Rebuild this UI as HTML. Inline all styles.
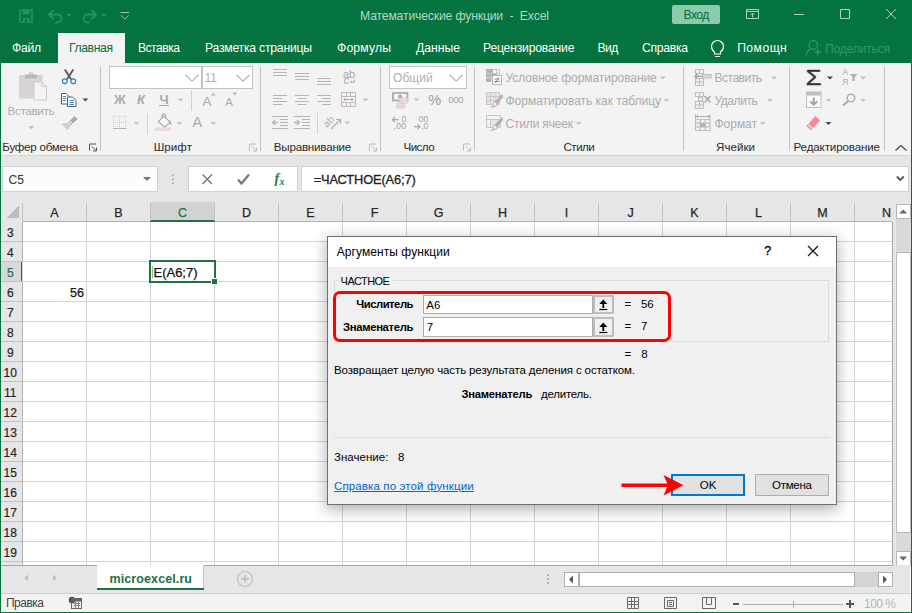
<!DOCTYPE html>
<html lang="ru"><head><meta charset="utf-8"><title>Математические функции - Excel</title>
<style>
html,body{margin:0;padding:0;}
body{width:912px;height:613px;overflow:hidden;position:relative;background:#fff;font-family:"Liberation Sans",sans-serif;}
.a{position:absolute;box-sizing:border-box;}
.t{position:absolute;white-space:pre;}
svg{position:absolute;overflow:visible;}
</style></head><body>
<div class="a" style="left:0px;top:0px;width:912px;height:63px;background:#04733f;"></div>
<div class="a" style="left:0px;top:63px;width:912px;height:93px;background:#f3f3f3;"></div>
<div class="a" style="left:0px;top:155px;width:912px;height:1px;background:#d4d4d4;"></div>
<div class="a" style="left:0px;top:156px;width:912px;height:46px;background:#e6e6e6;"></div>
<div class="a" style="left:58px;top:33px;width:67px;height:30px;background:#f3f3f3;"></div>
<span class="t" style="top:7.50px;font-size:12.2px;line-height:16px;color:#b1d9c5;left:360.00px;letter-spacing:-0.157px;">Математические функции  -  Excel</span>
<svg style="left:0;top:0" width="150" height="33" viewBox="0 0 150 33" fill="none" stroke="#1f9562" stroke-width="1.800">
<path d="M20 10h12v12h-12z" stroke-width="1.600"/><path d="M22.500 10h7v4.500h-7z M23 22v-4h6.500v4" fill="#1f9562" stroke="none"/><rect x="25" y="19" width="2" height="3" fill="#04733f" stroke="none"/>
<path d="M53.500 10l-4.500 4.500 4.500 4.500 M49.500 14.500h8a4 4 0 0 1 0 8h-2"/>
<path d="M66.500 14l2.500 3 2.500-3z" fill="#1f9562" stroke="none"/>
<path d="M91.500 10l4.500 4.500-4.500 4.500 M95.500 14.500h-8a4 4 0 0 0 0 8h2"/>
<path d="M101.500 14l2.500 3 2.500-3z" fill="#1f9562" stroke="none"/>
</svg>
<svg style="left:0;top:0" width="150" height="33" viewBox="0 0 150 33" fill="none" stroke="#8fcaae" stroke-width="1">
<path d="M120.500 12.500h8.500 M121 15.500l3.750 3.500 3.750-3.500"/></svg>
<div class="a" style="left:672px;top:5px;width:48px;height:19px;background:#8ccbae;border-radius:2px;"></div>
<span class="t" style="top:6.60px;font-size:12.2px;line-height:16px;color:#0a6b3c;left:683.44px;letter-spacing:-0.550px;">Вход</span>
<svg style="left:0;top:0" width="912" height="33" viewBox="0 0 912 33" fill="none" stroke="#a9d8c0" stroke-width="1">
<path d="M746.500 9.500h12v9h-12z M746.500 11.500h12 M752.500 17.500v-4 M750.500 15l2-2 2 2"/>
<path d="M794 14.500h10"/>
<path d="M840.500 9.500h9v9h-9z"/>
<path d="M886 9l10 10 M896 9l-10 10"/>
</svg>
<span class="t" style="top:40.00px;font-size:12.2px;line-height:16px;color:#fff;left:12.00px;letter-spacing:-0.321px;">Файл</span>
<span class="t" style="top:40.00px;font-size:12.2px;line-height:16px;color:#fff;left:138.00px;letter-spacing:-0.550px;">Вставка</span>
<span class="t" style="top:40.00px;font-size:12.2px;line-height:16px;color:#fff;left:205.00px;letter-spacing:-0.223px;">Разметка страницы</span>
<span class="t" style="top:40.00px;font-size:12.2px;line-height:16px;color:#fff;left:337.00px;letter-spacing:0.161px;">Формулы</span>
<span class="t" style="top:40.00px;font-size:12.2px;line-height:16px;color:#fff;left:416.00px;letter-spacing:-0.006px;">Данные</span>
<span class="t" style="top:40.00px;font-size:12.2px;line-height:16px;color:#fff;left:483.00px;letter-spacing:-0.201px;">Рецензирование</span>
<span class="t" style="top:40.00px;font-size:12.2px;line-height:16px;color:#fff;left:597.53px;letter-spacing:-0.550px;">Вид</span>
<span class="t" style="top:40.00px;font-size:12.2px;line-height:16px;color:#fff;left:642.00px;letter-spacing:-0.302px;">Справка</span>
<span class="t" style="top:40.00px;font-size:12.2px;line-height:16px;color:#fff;left:737.15px;letter-spacing:0.450px;">Помощн</span>
<span class="t" style="top:40.00px;font-size:12.2px;line-height:16px;color:#0a6b3c;left:69.00px;letter-spacing:-0.398px;">Главная</span>
<span class="t" style="top:40.50px;font-size:12.2px;line-height:16px;color:#2f9a68;left:825.00px;letter-spacing:-0.255px;">Поделиться</span>
<svg style="left:0;top:33px" width="912" height="30" viewBox="0 33 912 30" fill="none" stroke="#fff" stroke-width="1.200">
<path d="M714.500 52.500c-2-1.500-3-3-3-5.500a6 6 0 0 1 12 0c0 2.500-1 4-3 5.500v2h-6z M715 57h5" transform="translate(0,-0.500)"/>
<g stroke="#2f9a68" stroke-width="1.300"><circle cx="813.300" cy="45" r="4.300"/><path d="M806.200 55.500c0.300-3.500 2-5.500 4.800-6.500 M817.700 49v6.500 M814.500 52.200h6.500"/></g>
</svg>
<div class="a" style="left:100px;top:67px;width:1px;height:84px;background:#c3c3c3;"></div>
<div class="a" style="left:260px;top:67px;width:1px;height:84px;background:#c3c3c3;"></div>
<div class="a" style="left:380px;top:67px;width:1px;height:84px;background:#c3c3c3;"></div>
<div class="a" style="left:474px;top:67px;width:1px;height:84px;background:#c3c3c3;"></div>
<div class="a" style="left:683px;top:67px;width:1px;height:84px;background:#c3c3c3;"></div>
<div class="a" style="left:789px;top:67px;width:1px;height:84px;background:#c3c3c3;"></div>
<div class="a" style="left:884px;top:67px;width:1px;height:84px;background:#c3c3c3;"></div>
<div class="a" style="left:191px;top:90px;width:1px;height:21px;background:#d0d0d0;"></div>
<div class="a" style="left:147px;top:114px;width:1px;height:20px;background:#d0d0d0;"></div>
<div class="a" style="left:317.3px;top:113px;width:1px;height:21px;background:#d0d0d0;"></div>
<span class="t" style="top:139.20px;font-size:11.6px;line-height:15px;color:#2b2b2b;left:2.30px;letter-spacing:-0.253px;">Буфер обмена</span>
<span class="t" style="top:139.20px;font-size:11.6px;line-height:15px;color:#2b2b2b;left:153.70px;letter-spacing:0.039px;">Шрифт</span>
<span class="t" style="top:139.20px;font-size:11.6px;line-height:15px;color:#2b2b2b;left:273.80px;letter-spacing:-0.209px;">Выравнивание</span>
<span class="t" style="top:139.20px;font-size:11.6px;line-height:15px;color:#2b2b2b;left:403.53px;letter-spacing:-0.550px;">Число</span>
<span class="t" style="top:139.20px;font-size:11.6px;line-height:15px;color:#2b2b2b;left:563.50px;letter-spacing:-0.525px;">Стили</span>
<span class="t" style="top:139.20px;font-size:11.6px;line-height:15px;color:#2b2b2b;left:716.00px;letter-spacing:0.023px;">Ячейки</span>
<span class="t" style="top:139.20px;font-size:11.6px;line-height:15px;color:#2b2b2b;left:793.50px;letter-spacing:-0.140px;">Редактирование</span>
<svg style="left:0;top:0" width="912" height="160" viewBox="0 0 912 160"><path d="M89.5 150.500v-6.500h6.500 M92 146.500l4 4 M96.5 147.500v3.500h-3.500" fill="none" stroke="#555" stroke-width="1"/><path d="M249.5 150.500v-6.500h6.500 M252 146.500l4 4 M256.5 147.500v3.500h-3.500" fill="none" stroke="#bbb" stroke-width="1"/><path d="M369.5 150.500v-6.500h6.500 M372 146.500l4 4 M376.5 147.500v3.500h-3.500" fill="none" stroke="#bbb" stroke-width="1"/><path d="M463.5 150.500v-6.500h6.500 M466 146.500l4 4 M470.5 147.500v3.500h-3.500" fill="none" stroke="#bbb" stroke-width="1"/><path d="M895.500 150.500l5.500-5 5.500 5" fill="none" stroke="#444" stroke-width="1.200"/></svg>
<svg style="left:0;top:0" width="110" height="160" viewBox="0 0 110 160">
<rect x="19" y="75" width="23.500" height="23.500" rx="1" fill="#d9d3d6"/>
<path d="M25 78.500v-4h3.700a2.300 2.300 0 0 1 4.600 0h3.700v4z" fill="#bdb5b9"/><circle cx="31" cy="73.800" r="1" fill="#e6e0e3"/>
<path d="M34 82h8l4.500 4.500v13.500h-12.500z" fill="#f7f3f6" stroke="#cfc7cc" stroke-width="1"/>
<path d="M42 82v4.500h4.500" fill="none" stroke="#cfc7cc"/>
<path d="M28.3 126.0h6l-3 3z" fill="#bdbdbd" stroke="none"/>
<g fill="none" stroke="#5c5c5c" stroke-width="1.900"><path d="M64.800 69.500l6.300 9.700 M73.300 69.500l-6.300 9.700"/></g>
<g fill="none" stroke="#2f80c3" stroke-width="1.200"><circle cx="64.800" cy="81.200" r="2.400"/><circle cx="73.200" cy="81.200" r="2.400"/></g>
<g fill="#fff" stroke="#5a5a5a" stroke-width="1"><path d="M61.500 93.500h4.500l3 3v7.500h-7.500z"/><path d="M67.500 97h5l3.500 3.500v6h-8.500z"/></g>
<g stroke="#3a86c8" stroke-width="1"><path d="M63 96.500h3 M63 98.500h3 M63 100.500h3 M69.500 100.500h4.500 M69.500 102.500h4.500 M69.500 104.500h4.500"/></g>
<path d="M82.4 98.5h6l-3 3z" fill="#505050" stroke="none"/>
<path d="M74.500 116l3 3-4.500 4.500-3-3z" fill="#aea8ab"/><path d="M69.500 121l3 3-1 1.300-3.300-3.300z" fill="#bfb9bc"/><path d="M68 122.500l3 3-3.500 4.500-6.300-6.300z" fill="#d2ccd0"/>
</svg>
<span class="t" style="top:103.30px;font-size:11.6px;line-height:15px;color:#adabac;left:7.50px;letter-spacing:-0.306px;">Вставить</span>
<div class="a" style="left:109px;top:66px;width:93px;height:22.5px;background:#fff;border:1px solid #c3c3c3;"></div>
<div class="a" style="left:202px;top:66px;width:51px;height:22.5px;background:#fff;border:1px solid #c3c3c3;"></div>
<span class="t" style="top:69.50px;font-size:12px;line-height:16px;color:#b5adb1;left:204.57px;">11</span>
<span class="t" style="top:91.00px;font-size:13px;line-height:17px;color:#aaa;font-weight:700;left:114.03px;">Ж</span>
<span class="t" style="top:91.00px;font-size:13px;line-height:17px;color:#aaa;font-weight:700;font-style:italic;left:136.95px;">К</span>
<span class="t" style="top:91.00px;font-size:13px;line-height:17px;color:#aaa;font-weight:700;left:159.48px;">Ч</span>
<div class="a" style="left:159px;top:105px;width:10px;height:1px;background:#aaa;"></div>
<span class="t" style="top:92.50px;font-size:13.5px;line-height:18px;color:#aaa;left:202.55px;">A</span>
<span class="t" style="top:95.00px;font-size:11.5px;line-height:15px;color:#aaa;left:225.36px;">A</span>
<span class="t" style="top:113.10px;font-size:14.5px;line-height:19px;color:#aaa;left:192.56px;">A</span>
<svg style="left:0;top:0" width="270" height="160" viewBox="0 0 270 160">
<g fill="none" stroke="#a9a9a9" stroke-width="1.100"><path d="M185.500 74.800l6.500 6.300 6.500-6.300 M236.500 74.800l6.500 6.300 6.500-6.300"/></g>
<path d="M177.5 98.5h6l-3 3z" fill="#c4c4c4" stroke="none"/><path d="M133.5 122.0h6l-3 3z" fill="#c4c4c4" stroke="none"/><path d="M176.6 122.0h6l-3 3z" fill="#c4c4c4" stroke="none"/><path d="M210.4 122.0h6l-3 3z" fill="#c4c4c4" stroke="none"/>
<path d="M211 95.500h4.500l-2.250-3z M232.500 92.500h4.500l-2.250 3z" fill="#b5b5b5"/>
<g stroke="#d9c3cf" stroke-width="1" stroke-dasharray="1 1" fill="none"><path d="M113 116.500h13.500 M113 122.500h13.500 M113.500 116v12 M119.500 116v12 M125.500 116v12"/></g>
<path d="M113 128.500h13.500" stroke="#b8b0b4" stroke-width="1"/>
<path d="M158.500 121.500l5.500-5.500 6 6-5.500 5.500z M162 118v-2a1.800 1.800 0 0 1 3.600 0v3" fill="#fbfbfb" stroke="#ababab" stroke-width="1.200"/>
<path d="M169 120c1.800 1 2.500 3 2 5.500-1.200-1-1.800-2.500-2-5.500z" fill="#a5a5a5"/>
<rect x="155" y="127.500" width="16" height="3.500" fill="#ead9e1"/>
</svg>
<svg style="left:0;top:0" width="400" height="160" viewBox="0 0 400 160"><path d="M273 69.5H287 M273 72.5H287 M273 75.5H287 " stroke="#b9b3b6" stroke-width="1" fill="none"/><path d="M295 73.5H309 M295 76.5H309 M295 79.5H309 " stroke="#b9b3b6" stroke-width="1" fill="none"/><path d="M317 78.5H331 M317 81.5H331 M317 84.5H331 " stroke="#b9b3b6" stroke-width="1" fill="none"/><path d="M273 95.5H287 M273 98.5H282 M273 101.5H287 M273 104.5H282 " stroke="#b9b3b6" stroke-width="1" fill="none"/><path d="M295 95.5H309 M297.5 98.5H306.5 M295 101.5H309 M297.5 104.5H306.5 " stroke="#b9b3b6" stroke-width="1" fill="none"/><path d="M317 95.5H331 M322 98.5H331 M317 101.5H331 M322 104.5H331 " stroke="#b9b3b6" stroke-width="1" fill="none"/><path d="M272 116.5H288 M280 119.5H288 M280 122.5H288 M280 125.5H288 M272 128.5H288 " stroke="#b9b3b6" stroke-width="1" fill="none"/><path d="M278 122.500h-5.500 M275 120l-2.500 2.500 2.500 2.500" stroke="#b9b3b6" stroke-width="1.300" fill="none"/><path d="M294 116.5H310 M302 119.5H310 M302 122.5H310 M302 125.5H310 M294 128.5H310 " stroke="#b9b3b6" stroke-width="1" fill="none"/><path d="M294 122.500h5.500 M297 120l2.500 2.500-2.500 2.500" stroke="#b9b3b6" stroke-width="1.300" fill="none"/><g fill="none" stroke="#c4b8be" stroke-width="1"><path d="M341.500 92.500h14v14h-14z M341.500 96.500h14 M341.500 102.500h14 M346.500 92.500v4 M350.500 92.500v4 M346.500 102.500v4 M350.500 102.500v4"/>
<path d="M344 99.500h9 M345.500 98l-1.500 1.500 1.500 1.500 M351.500 98l1.500 1.500-1.500 1.500" stroke="#aaa"/></g><path d="M362.4 98.5h6l-3 3z" fill="#c4c4c4" stroke="none"/><path d="M344.4 121.5h6l-3 3z" fill="#c4c4c4" stroke="none"/><path d="M331 129l9-9 M336 119.500h4.500v4.500" stroke="#b0b0b0" stroke-width="1.200" fill="none"/><path d="M354.500 79.500v2.500h-4 M352 80.500l-1.500 1.500 1.500 1.500" stroke="#b0b0b0" stroke-width="1" fill="none"/></svg>
<span class="t" style="top:66.50px;font-size:11px;line-height:14px;color:#a6a6a6;left:342.88px;">ab</span>
<span class="t" style="top:73.00px;font-size:11px;line-height:14px;color:#a6a6a6;left:343.50px;">c</span>
<span class="t" style="top:114.50px;font-size:10px;line-height:13px;color:#b0b0b0;left:322.94px;transform:rotate(-45deg);transform-origin:50% 50%;">ab</span>
<div class="a" style="left:389px;top:66px;width:78px;height:22.5px;background:#fff;border:1px solid #c3c3c3;"></div>
<span class="t" style="top:69.50px;font-size:12px;line-height:16px;color:#b5adb1;left:393.00px;letter-spacing:0.078px;">Общий</span>
<span class="t" style="top:90.80px;font-size:14.5px;line-height:19px;color:#9e9e9e;left:428.20px;">%</span>
<span class="t" style="top:93.20px;font-size:9.8px;line-height:13px;color:#a2a2a2;left:448.28px;letter-spacing:-0.550px;">000</span>
<svg style="left:0;top:0" width="480" height="160" viewBox="0 0 480 160">
<path d="M449.700 74.800l6.500 6.300 6.500-6.300" fill="none" stroke="#a9a9a9" stroke-width="1.100"/>
<rect x="392.900" y="93" width="14.500" height="7.500" fill="#f3f3f3" stroke="#b0aaad" stroke-width="1.800"/>
<circle cx="400.200" cy="96.700" r="2.100" fill="#b0aaad"/>
<g fill="#e9e0e4" stroke="#d2c8cd" stroke-width="0.800"><ellipse cx="403.500" cy="99.500" rx="4.500" ry="1.500"/><ellipse cx="403.500" cy="102" rx="4.500" ry="1.500"/><ellipse cx="400.500" cy="104.500" rx="4.500" ry="1.500"/><ellipse cx="400.500" cy="106.800" rx="4.500" ry="1.500"/></g>
<path d="M413.5 98.5h6l-3 3z" fill="#c4c4c4" stroke="none"/>
<g fill="none" stroke="#a5a5a5" stroke-width="1.200"><path d="M398.500 119.700h-6 M395 117.200l-2.500 2.500 2.500 2.500 M414 126.700h6 M417.500 124.200l2.500 2.500-2.500 2.500"/></g>
</svg>
<span class="t" style="top:113.50px;font-size:8.5px;line-height:11px;color:#a0a0a0;left:401.39px;">0</span>
<span class="t" style="top:121.00px;font-size:8.5px;line-height:11px;color:#a0a0a0;left:393.50px;letter-spacing:0.342px;">,00</span>
<span class="t" style="top:113.50px;font-size:8.5px;line-height:11px;color:#a0a0a0;left:418.77px;">00</span>
<span class="t" style="top:121.00px;font-size:8.5px;line-height:11px;color:#a0a0a0;left:421.21px;">,0</span>
<span class="t" style="top:70.00px;font-size:12px;line-height:16px;color:#adabac;left:505.50px;letter-spacing:-0.062px;">Условное форматирование</span>
<span class="t" style="top:92.50px;font-size:12px;line-height:16px;color:#adabac;left:505.50px;letter-spacing:-0.022px;">Форматировать как таблицу</span>
<span class="t" style="top:115.50px;font-size:12px;line-height:16px;color:#adabac;left:505.50px;letter-spacing:-0.175px;">Стили ячеек</span>
<svg style="left:0;top:0" width="700" height="160" viewBox="0 0 700 160">
<path d="M659.8 76.5h6l-3 3z" fill="#c4c4c4" stroke="none"/><path d="M663.3 99.0h6l-3 3z" fill="#c4c4c4" stroke="none"/><path d="M575.5 122.0h6l-3 3z" fill="#c4c4c4" stroke="none"/>
<g fill="none" stroke="#cdc5c9" stroke-width="1">
<path d="M492.500 69.500h7v8h-7z M492.500 73.500h7 M496.500 69.500v8"/>
<path d="M486 69h6.500v4h-6.500z M486 73.500h10.500v4h-10.500z M486 78h5.500v4h-5.500z" fill="#b8b2b5" stroke="none"/>
<rect x="492.500" y="75.500" width="9" height="9" fill="#fafafa" stroke="#bdb5b9"/><path d="M494.500 79h5 M494.500 81.500h5 M498.500 77.500l-3 5.500" stroke="#8e8e8e"/>
<path d="M486.500 92.500h13v12h-13z" fill="#e9e3e6"/><path d="M486.500 96.500h13 M486.500 100.500h13 M490.500 92.500v12 M495 92.500v12"/>
<path d="M486.500 115.500h14v12h-14z" fill="#e9e3e6"/><path d="M486.500 119.500h14 M490.500 115.500v12"/><path d="M487 116h13v3h-13z M487 120h3v7h-3z" fill="#f3f3f3" stroke="none"/>
</g>
<path d="M502 94l1.200 2.800-5.700 7.400-3-2.500z" fill="#b5afb2"/><circle cx="494.900" cy="104.3" r="2.100" fill="#efefef" stroke="#b5afb2" stroke-width="0.900"/><path d="M493.300 105.3l-3.500 2.700 5.800-1.300z" fill="#b5afb2"/><path d="M502 117l1.200 2.800-5.700 7.400-3-2.500z" fill="#b5afb2"/><circle cx="494.900" cy="127.3" r="2.100" fill="#efefef" stroke="#b5afb2" stroke-width="0.900"/><path d="M493.300 128.3l-3.500 2.700 5.800-1.300z" fill="#b5afb2"/>
</svg>
<span class="t" style="top:70.00px;font-size:12px;line-height:16px;color:#adabac;left:714.50px;letter-spacing:-0.481px;">Вставить</span>
<span class="t" style="top:92.50px;font-size:12px;line-height:16px;color:#adabac;left:714.50px;letter-spacing:-0.427px;">Удалить</span>
<span class="t" style="top:115.50px;font-size:12px;line-height:16px;color:#adabac;left:714.50px;letter-spacing:-0.025px;">Формат</span>
<svg style="left:0;top:0" width="912" height="160" viewBox="0 0 912 160">
<path d="M771 76.5h6l-3 3z" fill="#c4c4c4" stroke="none"/><path d="M767 99.0h6l-3 3z" fill="#c4c4c4" stroke="none"/><path d="M759.75 122.0h6l-3 3z" fill="#c4c4c4" stroke="none"/>
<g fill="none" stroke="#c4bcc0" stroke-width="1.200">
<path d="M695.500 69.500h8v4h-8z M699.500 69.500v4 M695.500 78.500h8v7h-8z M695.500 82h8 M699.500 78.500v7"/>
<path d="M702.500 74.500h8.500v3.500h-8.500z" fill="#ddd6da"/>
<path d="M701.500 76.200h-6.500 M697.500 73.700l-2.500 2.500 2.500 2.500" stroke="#a8a2a5" stroke-width="1.400"/>
<path d="M695.500 92.500h8v4h-8z M699.500 92.500v4 M695.500 101.500h8v7h-8z M695.500 105h8 M699.500 101.500v7 M698.500 97.500h4v3.500h-4z"/>
<path d="M704.500 96l6 6.500 M710.500 96l-6 6.500" stroke="#aaa4a7" stroke-width="1.400"/>
<path d="M695.500 119.500h14.500v11h-14.500z M695.500 123.200h14.500 M695.500 126.800h14.500 M700.300 119.500v11 M705.200 119.500v11"/>
<rect x="700.300" y="123.200" width="4.900" height="3.600" fill="#b5afb2" stroke="none"/>
<path d="M695.500 114.500v4 M710 114.500v4 M696 116.500h14 M698 115l-1.500 1.500 1.500 1.500 M708 115l1.500 1.500-1.500 1.500" stroke="#b0aaad" stroke-width="1"/>
</g>
</svg>
<span class="t" style="top:63.50px;font-size:21.5px;line-height:28px;color:#333;left:807.10px;transform:scaleX(1.22);-webkit-text-stroke:0.3px #333;">Σ</span>
<svg style="left:0;top:0" width="912" height="160" viewBox="0 0 912 160">
<path d="M827 76.5h6l-3 3z" fill="#444" stroke="none"/><path d="M860 76.5h6l-3 3z" fill="#c4c4c4" stroke="none"/><path d="M825.5 99.0h6l-3 3z" fill="#c4c4c4" stroke="none"/><path d="M860 99.0h6l-3 3z" fill="#c4c4c4" stroke="none"/><path d="M825.5 122.0h6l-3 3z" fill="#444" stroke="none"/>
<path d="M849.800 74h7.600l-2.700 3.200v3.800h-2.200v-3.800z" fill="#b3adb0"/>
<rect x="806.500" y="92" width="14.500" height="15.500" fill="#fbfbfb" stroke="#c3bcc0"/><rect x="806.500" y="92" width="14.500" height="3.500" fill="#c3bcc0"/>
<path d="M813.750 97.500v7 M810.300 101.300l3.450 3.450 3.450-3.450" fill="none" stroke="#a5a0a3" stroke-width="1.900"/>
<circle cx="851" cy="98" r="3.800" fill="#f8f3f6" stroke="#b3adb0" stroke-width="1.500"/><path d="M848 101l-5 4.500" stroke="#b3adb0" stroke-width="2.300"/>
<path d="M815.500 116l4.700 4.500-7.200 7.700-4.700-4.500z" fill="#ff8896"/><path d="M807.600 124.400l4.700 4.500-1.400 1.400-4.700-4.500z" fill="#ff8896"/>
</svg>
<span class="t" style="top:66.70px;font-size:8.8px;line-height:11px;color:#b0aaad;left:842.27px;">A</span>
<span class="t" style="top:76.50px;font-size:8.8px;line-height:11px;color:#b0aaad;left:842.02px;">Я</span>
<div class="a" style="left:2px;top:166px;width:156px;height:26px;background:#fcfcfc;border:1px solid #d0d0d0;"></div>
<div class="a" style="left:188px;top:166px;width:110px;height:26px;background:#fff;border:1px solid #d0d0d0;"></div>
<div class="a" style="left:301px;top:166px;width:608px;height:26px;background:#fff;border:1px solid #d0d0d0;"></div>
<span class="t" style="top:171.50px;font-size:12px;line-height:16px;color:#333;left:8.58px;">C5</span>
<span class="t" style="top:171.00px;font-size:12.8px;line-height:17px;color:#222;left:313.70px;letter-spacing:-0.113px;-webkit-text-stroke:0.3px #222;">=ЧАСТНОЕ(A6;7)</span>
<svg style="left:0;top:0" width="912" height="200" viewBox="0 0 912 200">
<path d="M143 177h8l-4 4z" fill="#777"/>
<g fill="#b0b0b0"><rect x="172" y="174.500" width="2" height="1.800"/><rect x="172" y="178.500" width="2" height="1.800"/><rect x="172" y="182.500" width="2" height="1.800"/></g>
<path d="M202.500 174.500l9.500 9.500 M212 174.500l-9.500 9.500" stroke="#777" stroke-width="1.400" fill="none"/>
<path d="M238 179.500l3.500 4 7.500-9" stroke="#777" stroke-width="2.200" fill="none"/>
<path d="M896.800 176.500l3.500 3.500 3.500-3.500" stroke="#555" stroke-width="1.800" fill="none"/>
</svg>
<span class="t" style="top:169.50px;font-size:14px;line-height:18px;color:#1e7a47;font-weight:700;font-style:italic;left:274.42px;font-family:Liberation Serif,serif;">f</span>
<span class="t" style="top:175.00px;font-size:10px;line-height:13px;color:#1e7a47;font-weight:700;font-style:italic;left:279.47px;font-family:Liberation Serif,serif;">x</span>
<div class="a" style="left:1px;top:202px;width:892px;height:363px;background:#fff;"></div>
<div class="a" style="left:1px;top:202px;width:909px;height:20px;background:#e6e6e6;"></div>
<div class="a" style="left:1px;top:222px;width:22px;height:343px;background:#e6e6e6;"></div>
<div class="a" style="left:150px;top:202px;width:65px;height:19px;background:#d2d2d2;"></div>
<div class="a" style="left:150px;top:220px;width:65px;height:2px;background:#1e7145;"></div>
<div class="a" style="left:1px;top:262px;width:21px;height:20px;background:#d8d8d8;"></div>
<div class="a" style="left:21px;top:262px;width:2px;height:20px;background:#1e7145;"></div>
<svg style="left:0;top:0" width="912" height="570" viewBox="0 0 912 570" shape-rendering="crispEdges"><path d="M22.5 222V565 M86.5 222V565 M150.5 222V565 M214.5 222V565 M278.5 222V565 M342.5 222V565 M406.5 222V565 M470.5 222V565 M534.5 222V565 M598.5 222V565 M662.5 222V565 M726.5 222V565 M790.5 222V565 M854.5 222V565 M23 241.5H892 M23 261.5H892 M23 281.5H892 M23 301.5H892 M23 321.5H892 M23 341.5H892 M23 361.5H892 M23 381.5H892 M23 401.5H892 M23 421.5H892 M23 441.5H892 M23 461.5H892 M23 481.5H892 M23 501.5H892 M23 521.5H892 M23 541.5H892 M23 561.5H892 M23 581.5H892 " stroke="#d4d4d4" stroke-width="1" fill="none"/><path d="M22.5 203V221 M86.5 203V221 M150.5 203V221 M214.5 203V221 M278.5 203V221 M342.5 203V221 M406.5 203V221 M470.5 203V221 M534.5 203V221 M598.5 203V221 M662.5 203V221 M726.5 203V221 M790.5 203V221 M854.5 203V221 M1 241.5H22 M1 261.5H22 M1 281.5H22 M1 301.5H22 M1 321.5H22 M1 341.5H22 M1 361.5H22 M1 381.5H22 M1 401.5H22 M1 421.5H22 M1 441.5H22 M1 461.5H22 M1 481.5H22 M1 501.5H22 M1 521.5H22 M1 541.5H22 M1 561.5H22 M1 581.5H22 " stroke="#c2c2c2" stroke-width="1" fill="none"/><path d="M23 221.500H150 M215 221.500H892 M22.500 222V262 M22.500 282V565" stroke="#b2b2b2" stroke-width="1" fill="none"/><path d="M892.500 222V565" stroke="#a6a6a6" stroke-width="1" fill="none"/><path d="M19 205.500v12h-12z" fill="#bdbdbd"/></svg>
<span class="t" style="top:204.60px;font-size:12.5px;line-height:16px;color:#262626;left:34.50px;width:40px;text-align:center;-webkit-text-stroke:0.25px currentColor;">A</span>
<span class="t" style="top:204.60px;font-size:12.5px;line-height:16px;color:#262626;left:98.50px;width:40px;text-align:center;-webkit-text-stroke:0.25px currentColor;">B</span>
<span class="t" style="top:204.60px;font-size:12.5px;line-height:16px;color:#1e7145;left:162.50px;width:40px;text-align:center;-webkit-text-stroke:0.25px currentColor;">C</span>
<span class="t" style="top:204.60px;font-size:12.5px;line-height:16px;color:#262626;left:226.50px;width:40px;text-align:center;-webkit-text-stroke:0.25px currentColor;">D</span>
<span class="t" style="top:204.60px;font-size:12.5px;line-height:16px;color:#262626;left:290.50px;width:40px;text-align:center;-webkit-text-stroke:0.25px currentColor;">E</span>
<span class="t" style="top:204.60px;font-size:12.5px;line-height:16px;color:#262626;left:354.50px;width:40px;text-align:center;-webkit-text-stroke:0.25px currentColor;">F</span>
<span class="t" style="top:204.60px;font-size:12.5px;line-height:16px;color:#262626;left:418.50px;width:40px;text-align:center;-webkit-text-stroke:0.25px currentColor;">G</span>
<span class="t" style="top:204.60px;font-size:12.5px;line-height:16px;color:#262626;left:482.50px;width:40px;text-align:center;-webkit-text-stroke:0.25px currentColor;">H</span>
<span class="t" style="top:204.60px;font-size:12.5px;line-height:16px;color:#262626;left:546.50px;width:40px;text-align:center;-webkit-text-stroke:0.25px currentColor;">I</span>
<span class="t" style="top:204.60px;font-size:12.5px;line-height:16px;color:#262626;left:610.50px;width:40px;text-align:center;-webkit-text-stroke:0.25px currentColor;">J</span>
<span class="t" style="top:204.60px;font-size:12.5px;line-height:16px;color:#262626;left:674.50px;width:40px;text-align:center;-webkit-text-stroke:0.25px currentColor;">K</span>
<span class="t" style="top:204.60px;font-size:12.5px;line-height:16px;color:#262626;left:738.50px;width:40px;text-align:center;-webkit-text-stroke:0.25px currentColor;">L</span>
<span class="t" style="top:204.60px;font-size:12.5px;line-height:16px;color:#262626;left:802.50px;width:40px;text-align:center;-webkit-text-stroke:0.25px currentColor;">M</span>
<span class="t" style="top:204.60px;font-size:12.5px;line-height:16px;color:#262626;left:866.50px;width:40px;text-align:center;-webkit-text-stroke:0.25px currentColor;">N</span>
<span class="t" style="top:224.50px;font-size:12px;line-height:16px;color:#262626;left:0.30px;width:20px;text-align:center;-webkit-text-stroke:0.2px currentColor;">3</span>
<span class="t" style="top:244.50px;font-size:12px;line-height:16px;color:#262626;left:0.30px;width:20px;text-align:center;-webkit-text-stroke:0.2px currentColor;">4</span>
<span class="t" style="top:264.50px;font-size:12px;line-height:16px;color:#1e7145;left:0.30px;width:20px;text-align:center;-webkit-text-stroke:0.2px currentColor;">5</span>
<span class="t" style="top:284.50px;font-size:12px;line-height:16px;color:#262626;left:0.30px;width:20px;text-align:center;-webkit-text-stroke:0.2px currentColor;">6</span>
<span class="t" style="top:304.50px;font-size:12px;line-height:16px;color:#262626;left:0.30px;width:20px;text-align:center;-webkit-text-stroke:0.2px currentColor;">7</span>
<span class="t" style="top:324.50px;font-size:12px;line-height:16px;color:#262626;left:0.30px;width:20px;text-align:center;-webkit-text-stroke:0.2px currentColor;">8</span>
<span class="t" style="top:344.50px;font-size:12px;line-height:16px;color:#262626;left:0.30px;width:20px;text-align:center;-webkit-text-stroke:0.2px currentColor;">9</span>
<span class="t" style="top:364.50px;font-size:12px;line-height:16px;color:#262626;left:0.30px;width:20px;text-align:center;-webkit-text-stroke:0.2px currentColor;">10</span>
<span class="t" style="top:384.50px;font-size:12px;line-height:16px;color:#262626;left:0.30px;width:20px;text-align:center;-webkit-text-stroke:0.2px currentColor;">11</span>
<span class="t" style="top:404.50px;font-size:12px;line-height:16px;color:#262626;left:0.30px;width:20px;text-align:center;-webkit-text-stroke:0.2px currentColor;">12</span>
<span class="t" style="top:424.50px;font-size:12px;line-height:16px;color:#262626;left:0.30px;width:20px;text-align:center;-webkit-text-stroke:0.2px currentColor;">13</span>
<span class="t" style="top:444.50px;font-size:12px;line-height:16px;color:#262626;left:0.30px;width:20px;text-align:center;-webkit-text-stroke:0.2px currentColor;">14</span>
<span class="t" style="top:464.50px;font-size:12px;line-height:16px;color:#262626;left:0.30px;width:20px;text-align:center;-webkit-text-stroke:0.2px currentColor;">15</span>
<span class="t" style="top:484.50px;font-size:12px;line-height:16px;color:#262626;left:0.30px;width:20px;text-align:center;-webkit-text-stroke:0.2px currentColor;">16</span>
<span class="t" style="top:504.50px;font-size:12px;line-height:16px;color:#262626;left:0.30px;width:20px;text-align:center;-webkit-text-stroke:0.2px currentColor;">17</span>
<span class="t" style="top:524.50px;font-size:12px;line-height:16px;color:#262626;left:0.30px;width:20px;text-align:center;-webkit-text-stroke:0.2px currentColor;">18</span>
<span class="t" style="top:544.50px;font-size:12px;line-height:16px;color:#262626;left:0.30px;width:20px;text-align:center;-webkit-text-stroke:0.2px currentColor;">19</span>
<span class="t" style="top:284.50px;font-size:12.5px;line-height:16px;color:#111;left:70.05px;-webkit-text-stroke:0.25px #111;">56</span>
<div class="a" style="left:149px;top:260px;width:67px;height:23px;border:2px solid #1e7145;"></div>
<div class="a" style="left:211px;top:278px;width:7px;height:7px;background:#1e7145;border:1px solid #fff;"></div>
<span class="t" style="top:264.00px;font-size:13px;line-height:17px;color:#111;left:153.50px;letter-spacing:-0.012px;-webkit-text-stroke:0.25px #111;">E(A6;7)</span>
<div class="a" style="left:151.5px;top:266px;width:1px;height:12px;background:#8fb8a0;"></div>
<div class="a" style="left:893px;top:202px;width:17.5px;height:363px;background:#e6e6e6;"></div>
<div class="a" style="left:896px;top:218px;width:14.5px;height:333px;background:#d9d9d9;"></div>
<div class="a" style="left:896px;top:204px;width:14.5px;height:14.5px;background:#fff;border:1px solid #b8b8b8;"></div>
<div class="a" style="left:896px;top:252px;width:14.5px;height:281px;background:#fff;border:1px solid #b8b8b8;"></div>
<div class="a" style="left:896px;top:551px;width:14.5px;height:14.5px;background:#fff;border:1px solid #b8b8b8;"></div>
<svg style="left:0;top:0" width="912" height="613" viewBox="0 0 912 613">
<path d="M899.200 213.500h8l-4-4z M899.200 556.500h8l-4 4z" fill="#666"/>
</svg>
<div class="a" style="left:1px;top:565px;width:909px;height:28px;background:#e6e6e6;"></div>
<div class="a" style="left:1px;top:565px;width:892px;height:1px;background:#a6a6a6;"></div>
<div class="a" style="left:97px;top:565px;width:107px;height:25px;background:#fff;"></div>
<div class="a" style="left:97px;top:588px;width:107px;height:2px;background:#1e7145;"></div>
<div class="a" style="left:203px;top:566px;width:1px;height:22px;background:#c0c0c0;"></div>
<span class="t" style="top:570.80px;font-size:12.5px;line-height:16px;color:#1e7145;font-weight:700;left:109.50px;letter-spacing:0.101px;">microexcel.ru</span>
<svg style="left:0;top:0" width="912" height="613" viewBox="0 0 912 613">
<path d="M28 574.500v7l-4-3.500z M53 574.500v7l4-3.500z" fill="#c2c2c2"/>
<circle cx="245" cy="579" r="7.500" fill="none" stroke="#bdbdbd" stroke-width="1.200"/>
<path d="M241 579h8 M245 575v8" stroke="#bdbdbd" stroke-width="1.400"/>
<g fill="#b5b5b5"><rect x="547" y="574" width="2" height="2"/><rect x="547" y="578" width="2" height="2"/><rect x="547" y="582" width="2" height="2"/></g>
</svg>
<div class="a" style="left:564px;top:572px;width:329px;height:15px;background:#d4d4d4;"></div>
<div class="a" style="left:564px;top:572px;width:15px;height:15px;background:#fff;border:1px solid #b0b0b0;"></div>
<div class="a" style="left:579px;top:572px;width:276px;height:15px;background:#fff;border:1px solid #b0b0b0;"></div>
<div class="a" style="left:878px;top:572px;width:15px;height:15px;background:#fff;border:1px solid #b0b0b0;"></div>
<svg style="left:0;top:0" width="912" height="613" viewBox="0 0 912 613">
<path d="M573 575.500v8l-4-4z M883 575.500v8l4-4z" fill="#555"/>
</svg>
<div class="a" style="left:1px;top:593px;width:909px;height:19px;background:#f3f3f3;"></div>
<div class="a" style="left:1px;top:593px;width:909px;height:1px;background:#cfcfcf;"></div>
<span class="t" style="top:595.00px;font-size:12px;line-height:16px;color:#444;left:6.00px;letter-spacing:-0.507px;">Правка</span>
<svg style="left:0;top:0" width="912" height="613" viewBox="0 0 912 613">
<circle cx="72" cy="600" r="3.200" fill="#4a4a4a"/>
<rect x="71.500" y="598.500" width="10" height="10" fill="none" stroke="#666"/><rect x="71.500" y="598.500" width="10" height="3" fill="#666"/>
<path d="M73.500 603.500h6.500 M73.500 605.500h6.500 M75.500 602v6 M78.500 602v6" stroke="#888" fill="none"/>
<g fill="none" stroke="#6a6a6a" stroke-width="1">
<path d="M627.500 597.500h11v11h-11z M627.500 601.500h11 M627.500 604.500h11 M631.500 597.500v11 M634.500 597.500v11"/>
<path d="M664.500 597.500h12v11h-12z M667.500 600.500h6v6h-6z M669 602.500h3 M669 604.500h3"/>
<path d="M702.500 597.500h13v11h-13z M706.500 597.500v7h5v-7"/>
</g>
<path d="M733 604h6" stroke="#555" stroke-width="2"/>
<path d="M743 604.500h100" stroke="#b0b0b0" stroke-width="1"/>
<path d="M793.500 601v7" stroke="#b0b0b0"/>
<path d="M846 604h8 M850 600v8" stroke="#555" stroke-width="2"/>
</svg>
<span class="t" style="top:595.50px;font-size:12px;line-height:16px;color:#b5b5b5;left:864.09px;letter-spacing:-0.550px;">100 %</span>
<div class="a" style="left:327px;top:236px;width:510px;height:268.5px;background:#f0f0f0;border:1px solid #6f6f6f;box-shadow:0 4px 14px 1px rgba(0,0,0,0.30);"></div>
<div class="a" style="left:328px;top:237px;width:508px;height:30px;background:#fff;"></div>
<span class="t" style="top:243.50px;font-size:12px;line-height:16px;color:#000;left:336.70px;letter-spacing:0.074px;">Аргументы функции</span>
<span class="t" style="top:242.80px;font-size:12.5px;line-height:16px;color:#000;left:764.27px;-webkit-text-stroke:0.3px #000;">?</span>
<svg style="left:0;top:0" width="912" height="300" viewBox="0 0 912 300">
<path d="M808 246l10 10 M818 246l-10 10" stroke="#111" stroke-width="1.200" fill="none"/></svg>
<div class="a" style="left:334px;top:280px;width:495px;height:62px;border:1px solid #dcdcdc;"></div>
<div class="a" style="left:338px;top:275px;width:55px;height:11px;background:#f0f0f0;"></div>
<span class="t" style="top:274.30px;font-size:11px;line-height:14px;color:#000;left:340.62px;letter-spacing:-0.550px;">ЧАСТНОЕ</span>
<div class="a" style="left:332.8px;top:290.8px;width:338.3px;height:51.2px;border:3.600px solid #ff0000;border-radius:7px;"></div>
<div class="a" style="left:423px;top:294.5px;width:170px;height:19.6px;background:#fff;border:1px solid #adadad;"></div>
<div class="a" style="left:592.7px;top:294.5px;width:21.8px;height:19.6px;background:#f0f0f0;border:2px solid #bdbdbd;"></div>
<div class="a" style="left:423px;top:317.3px;width:170px;height:19.6px;background:#fff;border:1px solid #adadad;"></div>
<div class="a" style="left:592.7px;top:317.3px;width:21.8px;height:19.6px;background:#f0f0f0;border:2px solid #bdbdbd;"></div>
<svg style="left:0;top:0" width="912" height="400" viewBox="0 0 912 400">
<g stroke="#000" fill="none"><path d="M603.300 308v-5" stroke-width="1.800"/><path d="M599.300 304l4-4.500 4 4.500z" fill="#000" stroke="none"/><path d="M599.300 309.500h8" stroke-width="1.200"/>
<path d="M603.300 331v-5" stroke-width="1.800"/><path d="M599.300 327l4-4.500 4 4.500z" fill="#000" stroke="none"/><path d="M599.300 332.500h8" stroke-width="1.200"/></g>
</svg>
<span class="t" style="top:296.70px;font-size:11.3px;line-height:15px;color:#000;font-weight:700;left:356.30px;letter-spacing:-0.503px;">Числитель</span>
<span class="t" style="top:319.90px;font-size:11.3px;line-height:15px;color:#000;font-weight:700;left:343.00px;letter-spacing:-0.337px;">Знаменатель</span>
<span class="t" style="top:297.50px;font-size:11.5px;line-height:15px;color:#000;left:426.32px;">A6</span>
<span class="t" style="top:320.10px;font-size:11.5px;line-height:15px;color:#000;left:426.80px;">7</span>
<span class="t" style="top:296.90px;font-size:11.5px;line-height:15px;color:#000;left:624.54px;">=</span>
<span class="t" style="top:319.10px;font-size:11.5px;line-height:15px;color:#000;left:624.54px;">=</span>
<span class="t" style="top:346.60px;font-size:11.5px;line-height:15px;color:#000;left:624.54px;">=</span>
<span class="t" style="top:296.90px;font-size:11.5px;line-height:15px;color:#000;left:640.90px;">56</span>
<span class="t" style="top:319.10px;font-size:11.5px;line-height:15px;color:#000;left:640.95px;">7</span>
<span class="t" style="top:346.60px;font-size:11.5px;line-height:15px;color:#000;left:641.20px;">8</span>
<span class="t" style="top:362.70px;font-size:11.5px;line-height:15px;color:#000;left:334.00px;letter-spacing:-0.117px;">Возвращает целую часть результата деления с остатком.</span>
<span class="t" style="top:386.90px;font-size:11.2px;line-height:15px;color:#000;font-weight:700;left:461.40px;letter-spacing:-0.225px;">Знаменатель</span>
<span class="t" style="top:386.90px;font-size:11.5px;line-height:15px;color:#000;left:541.00px;letter-spacing:-0.238px;">делитель.</span>
<div class="a" style="left:334px;top:437px;width:496px;height:1px;background:#dcdcdc;"></div>
<span class="t" style="top:450.10px;font-size:11.5px;line-height:15px;color:#000;left:334.00px;letter-spacing:0.026px;">Значение:</span>
<span class="t" style="top:450.10px;font-size:11.5px;line-height:15px;color:#000;left:398.00px;">8</span>
<span class="t" style="top:478.90px;font-size:11.5px;line-height:15px;color:#0066cc;left:334.00px;letter-spacing:0.132px;text-decoration:underline;">Справка по этой функции</span>
<div class="a" style="left:671px;top:474px;width:74px;height:22px;background:#e1e1e1;border:2px solid #0078d7;"></div>
<div class="a" style="left:755px;top:474px;width:74px;height:22px;background:#e1e1e1;border:1px solid #adadad;"></div>
<span class="t" style="top:477.50px;font-size:11.5px;line-height:15px;color:#000;left:699.69px;">OK</span>
<span class="t" style="top:477.50px;font-size:11.5px;line-height:15px;color:#000;left:772.00px;letter-spacing:-0.252px;">Отмена</span>
<svg style="left:0;top:0" width="912" height="520" viewBox="0 0 912 520">
<path d="M621.500 483.500h47v3.500h-47z" fill="#ff0000"/>
<path d="M663.500 475l20 10.200-20 10.200 4.500-10.200z" fill="#ff0000"/>
</svg>
<div class="a" style="left:0px;top:33px;width:1.2px;height:580px;background:#04733f;"></div>
<div class="a" style="left:910.5px;top:33px;width:1.5px;height:580px;background:#04733f;"></div>
<div class="a" style="left:0px;top:611.6px;width:912px;height:1.4px;background:#04733f;"></div>
</body></html>
